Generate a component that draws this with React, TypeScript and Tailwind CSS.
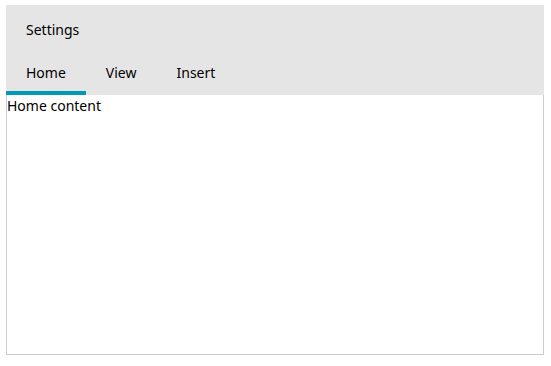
const tabs = ['Home', 'View', 'Insert'];

export default function App() {
  const active = 0;
  return (
    <div className="min-h-screen bg-white pt-[5px] pl-[6px] font-['Noto_Sans',sans-serif] text-[14px] text-black">
      <div className="w-[538px]">
        <div className="bg-[#e5e5e5]">
          <div className="flex h-[48px] items-center px-5">Settings</div>
          <div className="flex h-[42px] items-stretch">
            {tabs.map((t, i) => (
              <div
                key={t}
                className={
                  i === active
                    ? 'flex items-center border-b-4 border-[#0099b8] px-5'
                    : 'flex items-center border-b-4 border-transparent px-5'
                }
              >
                {t}
              </div>
            ))}
          </div>
        </div>
        <div className="h-[260px] border border-t-0 border-[#cccccc] pt-px leading-5">Home content</div>
      </div>
    </div>
  );
}
